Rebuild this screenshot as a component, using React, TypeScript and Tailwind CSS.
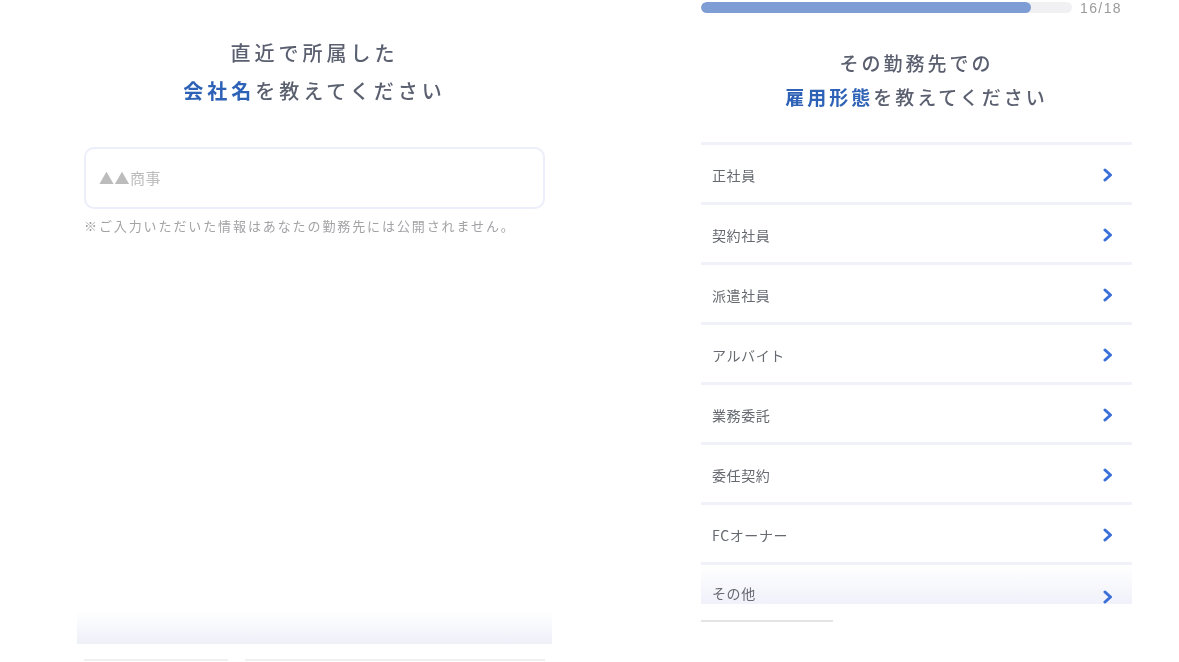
import React from 'react'

const font = { fontFamily: '"Noto Sans CJK JP", "Noto Sans", sans-serif' }

const options = ['正社員', '契約社員', '派遣社員', 'アルバイト', '業務委託', '委任契約', 'FCオーナー']

function Chevron() {
  return (
    <svg width="12" height="14" viewBox="0 0 12 14" className="mr-[18px]">
      <polyline points="3,2 8.5,7 3,12" fill="none" stroke="#3a6fd8" strokeWidth="3" strokeLinecap="round" strokeLinejoin="round" />
    </svg>
  )
}

function OptionRow({ label, last }: { label: string; last?: boolean }) {
  return (
    <>
      <div className="h-[3px] bg-[#f1f2f9]" />
      <div
        className={
          last
            ? 'h-[39px] flex items-end justify-between pl-[11px] bg-gradient-to-b from-white to-[#f0f1fa]'
            : 'h-[57px] flex items-center justify-between pl-[11px] pt-[3px]'
        }
      >
        <span className="text-[14px] tracking-[0.6px] text-[#666a70]">{label}</span>
        <Chevron />
      </div>
    </>
  )
}

export default function App() {
  return (
    <div className="w-[1179px] h-[662px] bg-white overflow-hidden flex blur-[0.4px]" style={font}>
      {/* left screen */}
      <div className="ml-[77px] w-[475px] h-full flex flex-col">
        <div className="pt-[34px] text-center text-[20px] leading-[38px] tracking-[4px] text-[#5b6070] font-medium">
          <div>直近で所属した</div>
          <div>
            <span className="text-[#2e62b6] font-bold">会社名</span>を教えてください
          </div>
        </div>
        <div className="px-[7px]">
          <div className="mt-[37px] h-[62px] rounded-[10px] border-2 border-[#eceefa] flex items-center pl-[13px]">
            <span className="text-[15px] text-[#bcbcbc] tracking-[0.5px]">▲▲商事</span>
          </div>
          <p className="mt-[8px] text-[13px] leading-[18px] tracking-[1.9px] text-[#a3a3a6]">
            ※ご入力いただいた情報はあなたの勤務先には公開されません。
          </p>
        </div>
        <div className="mt-auto h-[33px] bg-gradient-to-b from-white to-[#eef0f9]" />
        <div className="mt-[15px] mb-[1px] flex gap-[17px] px-[7px]">
          <div className="w-[144px] h-[2px] bg-[#f0f0f2]" />
          <div className="w-[300px] h-[2px] bg-[#f0f0f2]" />
        </div>
      </div>

      {/* right screen */}
      <div className="ml-[149px] w-[431px] h-full flex flex-col">
        <div className="h-[14px] flex items-center">
          <div className="w-[371px] h-[11px] rounded-full bg-[#f1f1f3] overflow-hidden">
            <div className="w-[330px] h-full rounded-full bg-[#7f9dd5]" />
          </div>
          <span className="ml-[8px] self-start pt-[2px] text-[14px] tracking-[1.4px] text-[#9a9a9a] leading-[13px] font-['Liberation_Sans',sans-serif]">
            16/18
          </span>
        </div>
        <div className="mt-[32px] text-center text-[19px] leading-[34px] tracking-[3px] text-[#5b6070] font-medium">
          <div>その勤務先での</div>
          <div>
            <span className="text-[#2e62b6] font-bold">雇用形態</span>を教えてください
          </div>
        </div>
        <div className="mt-[28px] flex flex-col">
          {options.map(o => (
            <OptionRow key={o} label={o} />
          ))}
          <OptionRow label="その他" last />
        </div>
        <div className="mt-[16px] w-[132px] h-[2px] bg-[#e4e4e6]" />
      </div>
    </div>
  )
}
